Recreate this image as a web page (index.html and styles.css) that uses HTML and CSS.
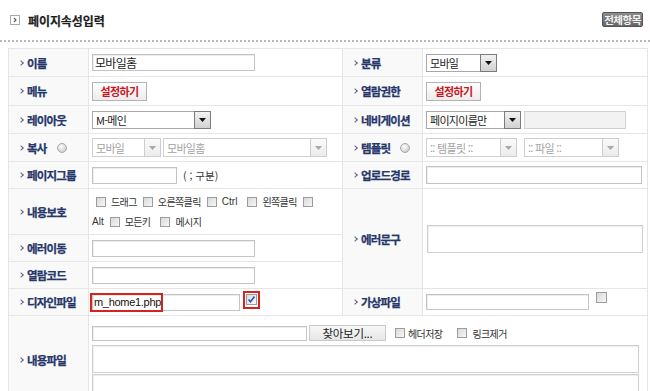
FILE: index.html
```html
<!DOCTYPE html>
<html lang="ko">
<head>
<meta charset="utf-8">
<title>페이지속성입력</title>
<link rel="stylesheet" href="styles.css">
</head>
<body>
<div class="page">
  <div class="head">
    <h1 class="title"><svg class="title-icon" width="10" height="10" viewBox="0 0 10 10"><rect x="0.5" y="0.5" width="9" height="9" fill="#fff" stroke="#a8a8a8"/><path d="M4 3 L6 5 L4 7" fill="none" stroke="#555" stroke-width="1.1"/></svg>페이지속성입력</h1>
    <span class="all-btn">전체항목</span>
  </div>
  <div class="dots"></div>
  <table class="form">
    <colgroup><col class="c-lab"><col class="c-val1"><col class="c-lab"><col class="c-val2"></colgroup>
    <tr class="h28">
      <th><span class="lab">이름</span></th>
      <td><input class="inp w163" type="text" value="모바일홈"></td>
      <th><span class="lab">분류</span></th>
      <td><span class="sel w71"><span class="txt">모바일</span><span class="btn"><svg width="7" height="4" viewBox="0 0 7 4"><path d="M0 0H7L3.5 4Z"/></svg></span></span></td>
    </tr>
    <tr class="h29">
      <th><span class="lab">메뉴</span></th>
      <td><span class="set-btn">설정하기</span></td>
      <th><span class="lab">열람권한</span></th>
      <td><span class="set-btn">설정하기</span></td>
    </tr>
    <tr class="h28">
      <th><span class="lab">레이아웃</span></th>
      <td><span class="sel w119"><span class="txt">M-메인</span><span class="btn"><svg width="7" height="4" viewBox="0 0 7 4"><path d="M0 0H7L3.5 4Z"/></svg></span></span></td>
      <th><span class="lab">네비게이션</span></th>
      <td><div class="line"><span class="sel w95"><span class="txt">페이지이름만</span><span class="btn"><svg width="7" height="4" viewBox="0 0 7 4"><path d="M0 0H7L3.5 4Z"/></svg></span></span><input class="inp off w102" type="text" disabled></div></td>
    </tr>
    <tr class="h28">
      <th><span class="lab">복사<span class="radio"></span></span></th>
      <td><div class="line gap2"><span class="sel dis w69"><span class="txt">모바일</span><span class="btn"><svg width="7" height="4" viewBox="0 0 7 4"><path d="M0 0H7L3.5 4Z"/></svg></span></span><span class="sel dis w164"><span class="txt">모바일홈</span><span class="btn"><svg width="7" height="4" viewBox="0 0 7 4"><path d="M0 0H7L3.5 4Z"/></svg></span></span></div></td>
      <th><span class="lab">템플릿<span class="radio"></span></span></th>
      <td><div class="line gap7"><span class="sel dis w91"><span class="txt">:: 템플릿 ::</span><span class="btn"><svg width="7" height="4" viewBox="0 0 7 4"><path d="M0 0H7L3.5 4Z"/></svg></span></span><span class="sel dis w95"><span class="txt">:: 파일 ::</span><span class="btn"><svg width="7" height="4" viewBox="0 0 7 4"><path d="M0 0H7L3.5 4Z"/></svg></span></span></div></td>
    </tr>
    <tr class="h27">
      <th><span class="lab">페이지그룹</span></th>
      <td><div class="line"><input class="inp w85" type="text"><span class="note">( ; 구분)</span></div></td>
      <th><span class="lab">업로드경로</span></th>
      <td><input class="inp w216 h18" type="text"></td>
    </tr>
    <tr class="h46">
      <th><span class="lab">내용보호</span></th>
      <td>
        <div class="chk-line">
          <span class="cb"></span><span class="ct">드래그</span>
          <span class="cb"></span><span class="ct">오른쪽클릭</span>
          <span class="cb"></span><span class="ct en">Ctrl</span>
          <span class="cb"></span><span class="ct">왼쪽클릭</span>
          <span class="cb"></span>
        </div>
        <div class="chk-line second">
          <span class="ct en first">Alt</span>
          <span class="cb"></span><span class="ct">모든키</span>
          <span class="cb wide-gap"></span><span class="ct">메시지</span>
        </div>
      </td>
      <th rowspan="3"><span class="lab">에러문구</span></th>
      <td rowspan="3"><textarea class="ta w216"></textarea></td>
    </tr>
    <tr class="h27">
      <th><span class="lab">에러이동</span></th>
      <td><input class="inp w163" type="text"></td>
    </tr>
    <tr class="h27">
      <th><span class="lab">열람코드</span></th>
      <td><input class="inp w163" type="text"></td>
    </tr>
    <tr class="h27">
      <th><span class="lab">디자인파일</span></th>
      <td>
        <div class="design">
          <input class="inp en-val w148" type="text" value="m_home1.php">
          <span class="cb checked"><svg width="9" height="9" viewBox="0 0 9 9"><path d="M1.5 4.5 L3.5 6.8 L7.5 1.5" fill="none" stroke="#2a55b8" stroke-width="1.6"/></svg></span>
          <span class="hl hl-input"></span>
          <span class="hl hl-check"></span>
        </div>
      </td>
      <th><span class="lab">가상파일</span></th>
      <td><div class="virt"><input class="inp w163 h16" type="text"><span class="cb"></span></div></td>
    </tr>
    <tr class="h88">
      <th><span class="lab">내용파일</span></th>
      <td colspan="3" class="top">
        <div class="file-line">
          <input class="inp file-txt" type="text">
          <span class="browse">찾아보기...</span>
          <span class="cb cb-a"></span><span class="ct ct-a">헤더저장</span>
          <span class="cb cb-b"></span><span class="ct ct-b">링크제거</span>
        </div>
        <textarea class="ta wide first-ta"></textarea>
        <textarea class="ta wide"></textarea>
      </td>
    </tr>
  </table>
</div>
</body>
</html>
```
FILE: styles.css
```css
* { box-sizing: border-box; }
html, body { margin: 0; padding: 0; background: #fff; }
body {
  width: 650px;
  height: 391px;
  overflow: hidden;
  font-family: "Liberation Sans", "Noto Sans CJK KR", sans-serif;
  font-size: 11px;
  color: #333;
}

.head {
  height: 40px;
  display: flex;
  align-items: center;
  justify-content: space-between;
  padding: 0 7px 0 10px;
}
.title {
  margin: 0;
  display: flex;
  align-items: center;
  font-family: "Noto Sans CJK KR", sans-serif;
  font-size: 12px;
  font-weight: bold;
  letter-spacing: -0.1px;
  color: #1e1e1e;
  -webkit-text-stroke: 0.2px #1e1e1e;
}
.title-icon { margin-right: 8px; display: block; }
.all-btn {
  width: 41px;
  height: 15px;
  margin-top: -1px;
  display: flex;
  align-items: center;
  justify-content: center;
  background: linear-gradient(#8c8c8c, #666);
  border: 1px solid #555;
  border-radius: 2px;
  color: #f4f4f4;
  font-family: "Noto Sans CJK KR", sans-serif;
  font-size: 10.5px;
  font-weight: bold;
  letter-spacing: -0.5px;
}
.dots {
  height: 2px;
  margin-bottom: 6px;
  background: repeating-linear-gradient(90deg, #b8b8b8 0 2px, transparent 2px 4px);
}

.form {
  margin-left: 8px;
  width: 639px;
  border-collapse: collapse;
  table-layout: fixed;
}
.c-lab { width: 80px; }
.c-val1 { width: 254px; }
.c-val2 { width: 225px; }
.form th, .form td {
  border: 1px solid #e6e6e6;
  vertical-align: middle;
}
.form th {
  background: #f9f9f9;
  text-align: left;
  padding: 0 0 0 10px;
}
.form td { padding: 0 0 0 3px; }
.form td.top { vertical-align: top; padding-top: 9px; }
.h27 { height: 27px; }
.h28 { height: 28px; }
.h29 { height: 29px; }
.h46 { height: 46px; }
.h88 { height: 88px; }

.lab {
  display: flex;
  align-items: center;
  font-family: "Noto Sans CJK KR", sans-serif;
  font-size: 11.5px;
  font-weight: bold;
  letter-spacing: -0.8px;
  color: #26366a;
  -webkit-text-stroke: 0.25px #26366a;
}
.lab::before {
  content: "";
  width: 3px;
  height: 3px;
  border-top: 1px solid #5a6482;
  border-right: 1px solid #5a6482;
  transform: rotate(45deg);
  margin-right: 4px;
  flex: none;
}
.radio {
  width: 10px;
  height: 10px;
  margin-left: 10px;
  border-radius: 50%;
  border: 1px solid #a9a9a9;
  background: radial-gradient(circle at 40% 35%, #fdfdfd, #cfcfcf 75%);
  flex: none;
}

.line { display: flex; align-items: center; gap: 3px; }
.gap2 { gap: 2px; }
.gap7 { gap: 7px; }

.inp {
  height: 17px;
  padding: 0 2px;
  margin: 0;
  border: 1px solid #c4c4c4;
  box-shadow: inset 1px 1px 0 #ececec;
  background: #fff;
  font-family: "Noto Sans CJK KR", sans-serif;
  font-size: 12px;
  letter-spacing: -0.7px;
  color: #222;
  vertical-align: middle;
  outline: none;
}
.inp.en-val {
  font-family: "Liberation Sans", sans-serif;
  font-size: 11px;
  letter-spacing: -0.3px;
  padding-left: 1px;
  color: #111;
}
.inp.off { background: #f2f2f2; border-color: #d2d2d2; box-shadow: none; height: 18px; }
.h16 { height: 16px; }
.h18 { height: 18px; }
.w71 { width: 71px; }
.w85 { width: 85px; }
.w69 { width: 69px; }
.w91 { width: 91px; }
.w95 { width: 95px; }
.w102 { width: 102px; }
.w119 { width: 119px; }
.w148 { width: 148px; }
.w163 { width: 163px; }
.w164 { width: 164px; }
.w216 { width: 216px; }

.note {
  margin-left: 3px;
  font-family: "Noto Sans CJK KR", sans-serif;
  font-size: 10.5px;
  letter-spacing: 0;
  color: #333;
}

.sel {
  display: inline-flex;
  align-items: stretch;
  height: 18px;
  border: 1px solid #a8a8a8;
  background: #fff;
  vertical-align: middle;
  font-family: "Noto Sans CJK KR", sans-serif;
  font-size: 11px;
  letter-spacing: -0.7px;
  color: #222;
}
.sel .txt {
  flex: 1;
  display: flex;
  align-items: center;
  padding-left: 3px;
  white-space: nowrap;
  overflow: hidden;
}
.sel .btn {
  width: 17px;
  margin: -1px -1px -1px 0;
  display: flex;
  align-items: center;
  justify-content: center;
  border: 1px solid #7c7c7c;
  background: linear-gradient(#f2f2f2, #d2d2d2);
}
.sel .btn svg { fill: #111; display: block; }
.sel.dis { border-color: #d0d0d0; color: #a3a3a3; height: 19px; }
.sel.dis .btn { border-color: #cdcdcd; background: linear-gradient(#fafafa, #ececec); }
.sel.dis .btn svg { fill: #a8a8a8; }

.set-btn {
  display: inline-flex;
  align-items: center;
  justify-content: center;
  width: 55px;
  height: 19px;
  border: 1px solid #b3b3b3;
  background: linear-gradient(#ffffff, #ececec);
  font-family: "Noto Sans CJK KR", sans-serif;
  font-size: 11px;
  font-weight: bold;
  letter-spacing: -0.6px;
  color: #c8151b;
  vertical-align: middle;
}

.cb {
  width: 10px;
  height: 10px;
  flex: none;
  display: inline-flex;
  align-items: center;
  justify-content: center;
  border: 1px solid #9c9c9c;
  background: linear-gradient(135deg, #d9d9d9, #f7f7f7);
}
.ct {
  font-family: "Noto Sans CJK KR", sans-serif;
  font-size: 10px;
  letter-spacing: -0.6px;
  color: #333;
  white-space: nowrap;
}
.ct.en { font-family: "Liberation Sans", sans-serif; font-size: 10px; letter-spacing: 0; }

.chk-line {
  display: flex;
  align-items: center;
  height: 20px;
}
.chk-line .cb { margin: 0 5px 0 6px; }
.chk-line .cb:first-child { margin-left: 4px; }
.chk-line .cb.wide-gap { margin-left: 10px; }
.chk-line .ct.en { margin-right: 4px; }
.chk-line.second .ct.first { margin-left: 0; margin-right: 0; }

.ta {
  display: block;
  margin: 0;
  padding: 0;
  height: 28px;
  border: 1px solid #cfcfcf;
  box-shadow: inset 1px 1px 0 #efefef;
  resize: none;
  background: #fff;
  outline: none;
}
.ta.w216 { width: 216px; margin-left: 1px; }
.ta.wide { width: 547px; margin-top: 1px; }
.ta.first-ta { margin-top: 4px; }

.design {
  position: relative;
  display: flex;
  align-items: flex-start;
}
.design .cb { width: 11px; height: 11px; margin: 0 0 0 6px; background: linear-gradient(135deg, #dcdcdc, #fafafa); }
.hl {
  position: absolute;
  border: 2px solid #d4241d;
}
.hl-input { left: -2px; top: -1px; width: 73px; height: 19px; }
.hl-check { left: 151px; top: -3px; width: 17px; height: 18px; }

.virt { display: flex; align-items: flex-start; }
.virt .cb { width: 11px; height: 11px; margin: -2px 0 0 7px; }

.file-line {
  display: flex;
  align-items: center;
  height: 16px;
}
.file-txt { width: 215px; height: 15px; }
.browse {
  width: 77px;
  height: 16px;
  margin-left: 2px;
  display: flex;
  align-items: center;
  justify-content: center;
  border: 1px solid #c9c9c9;
  background: linear-gradient(#f7f7f7, #e6e6e6);
  font-family: "Noto Sans CJK KR", sans-serif;
  font-size: 11.5px;
  letter-spacing: -0.3px;
  color: #222;
}
.file-line .cb-a { margin-left: 9px; }
.file-line .ct-a { margin-left: 3px; }
.file-line .cb-b { margin-left: 15px; }
.file-line .ct-b { margin-left: 5px; }
```
